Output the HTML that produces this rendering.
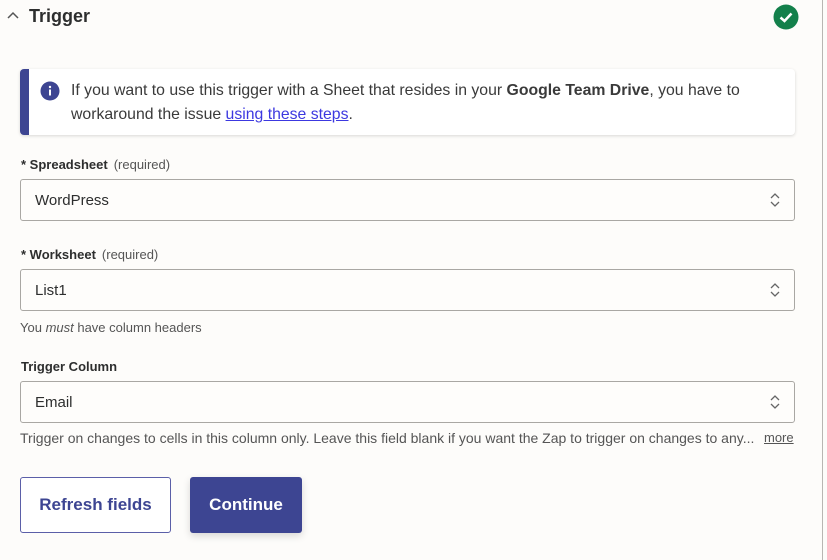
<!DOCTYPE html><html><head><style>
body{margin:0;width:827px;height:560px;background:#fdfcfa;font-family:"Liberation Sans",sans-serif;position:relative;overflow:hidden;color:#2d2e2e}
.a{position:absolute}
.rb{right:0;top:0;width:4px;height:560px;background:#fdfcfa;border-left:1px solid #b8b6b2}
.box{position:absolute;left:20px;width:773px;height:40px;border:1px solid #a9a7a3;border-radius:3px;background:#fefdfb;font-size:15px;line-height:42px;text-indent:14px;color:#2d2e2e}
.lbl{position:absolute;left:21px;font-size:13px;font-weight:bold;color:#2d2e2e}
.lbl span{font-weight:normal;color:#555;margin-left:6px}
.sm{position:absolute;font-size:13px;color:#555}
</style></head><body>
<div class="a rb"></div>
<svg class="a" style="left:6px;top:10px" width="14" height="10"><path d="M2 8 L7 3 L12 8" stroke="#555" stroke-width="1.5" fill="none"/></svg>
<div class="a" style="left:29px;top:6px;font-size:18px;color:#2d2e2e;font-weight:600">Trigger</div>
<svg class="a" style="left:773px;top:4px" width="26" height="26"><circle cx="13" cy="13" r="12.5" fill="#13804b"/><path d="M7.5 13.5 L11.5 17 L18.5 9.5" stroke="#fff" stroke-width="2.5" fill="none"/></svg>
<div class="a" style="left:20px;top:69px;width:775px;height:66px;background:#fff;border-radius:4px;box-shadow:0 1px 3px rgba(0,0,0,.15);border-left:9px solid #3d4592;box-sizing:border-box"></div>
<svg class="a" style="left:40px;top:81px" width="20" height="20"><circle cx="10" cy="10" r="9.5" fill="#3d4592"/><rect x="9" y="8.5" width="2" height="6" fill="#fff"/><circle cx="10" cy="6" r="1.2" fill="#fff"/></svg>
<div class="a" style="left:71px;top:79px;font-size:15.8px;line-height:24px;color:#3a3a3a">If you want to use this trigger with a Sheet that resides in your <b>Google Team Drive</b>, you have to<br>workaround the issue <span style="color:#3c38e0;text-decoration:underline">using these steps</span>.</div>
<div class="lbl" style="top:157px">* Spreadsheet<span>(required)</span></div>
<div class="box" style="top:179px">WordPress</div>
<svg class="a" style="left:768px;top:192px" width="14" height="16"><path d="M3 6 L7 2 L11 6 M3 10 L7 14 L11 10" stroke="#666" stroke-width="1.3" fill="none"/></svg>
<div class="lbl" style="top:247px">* Worksheet<span>(required)</span></div>
<div class="box" style="top:269px">List1</div>
<svg class="a" style="left:768px;top:282px" width="14" height="16"><path d="M3 6 L7 2 L11 6 M3 10 L7 14 L11 10" stroke="#666" stroke-width="1.3" fill="none"/></svg>
<div class="sm" style="left:20px;top:320px">You <i>must</i> have column headers</div>
<div class="lbl" style="top:359px">Trigger Column</div>
<div class="box" style="top:381px">Email</div>
<svg class="a" style="left:768px;top:394px" width="14" height="16"><path d="M3 6 L7 2 L11 6 M3 10 L7 14 L11 10" stroke="#666" stroke-width="1.3" fill="none"/></svg>
<div class="sm" style="left:20px;top:430px;font-size:14px">Trigger on changes to cells in this column only. Leave this field blank if you want the Zap to trigger on changes to any...</div>
<div class="sm" style="left:764px;top:430px;text-decoration:underline">more</div>
<div class="a" style="left:20px;top:477px;width:149px;height:54px;border:1px solid #5b5fa8;border-radius:3px;background:#fff;color:#3d4592;font-size:17px;font-weight:bold;text-align:center;line-height:54px">Refresh fields</div>
<div class="a" style="left:190px;top:477px;width:112px;height:56px;background:#3d4592;border-radius:3px;color:#fff;font-size:17px;font-weight:bold;text-align:center;line-height:56px;box-shadow:0 3px 8px rgba(0,0,0,.15)">Continue</div>
</body></html>
